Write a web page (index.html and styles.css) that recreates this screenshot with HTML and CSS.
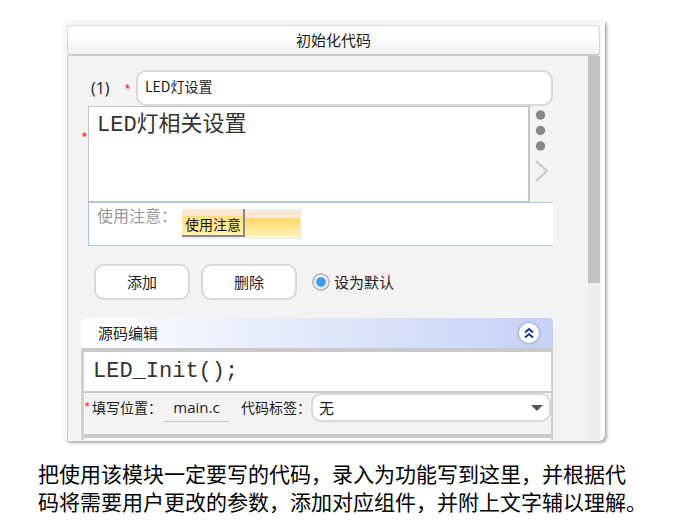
FILE: index.html
```
<!DOCTYPE html>
<html lang="zh-CN">
<head>
<meta charset="utf-8">
<title>初始化代码</title>
<link rel="stylesheet" href="styles.css">
</head>
<body>
<main class="page">
  <section class="panel">
    <h1 class="panel-title">初始化代码</h1>
    <div class="panel-body">
      <form class="content">
        <div class="name-row">
          <label class="index" for="name">(1)</label>
          <span class="required">*</span>
          <input class="box name-input" id="name" type="text" value="LED灯设置">
        </div>
        <div class="desc-row">
          <label class="required desc-mark" for="desc">*</label>
          <textarea class="mono desc-input" id="desc">LED灯相关设置</textarea>
          <div class="tools">
            <svg class="dots" viewBox="0 0 12 44" aria-hidden="true">
              <circle cx="5.500" cy="7" r="4.700"/><circle cx="5.500" cy="22.500" r="4.700"/><circle cx="5.500" cy="38" r="4.700"/>
            </svg>
            <svg class="arrow" viewBox="0 0 14 22" aria-hidden="true"><path d="M1 1 12 11 1 21"/></svg>
          </div>
        </div>
        <div class="note-row">
          <label class="note-label" for="note">使用注意：</label>
          <div class="note-field">
            <span class="note-tag">使用注意</span>
            <input class="note-input" id="note" type="text">
          </div>
        </div>
        <div class="actions">
          <button class="box action" type="button">添加</button>
          <button class="box action" type="button">删除</button>
          <label class="default"><input class="radio" type="radio" checked>设为默认</label>
        </div>
        <div class="source">
          <header class="source-head">
            <h2 class="source-title">源码编辑</h2>
            <button class="collapse" type="button" aria-label="收起">
              <svg viewBox="0 0 20 20" aria-hidden="true"><path d="M6 9.500 10 6l4 3.500M6 14.500 10 11l4 3.500"/></svg>
            </button>
          </header>
          <div class="source-frame">
            <input class="mono code" type="text" value="LED_Init();" aria-label="源码编辑">
            <div class="meta">
              <label class="meta-label" for="place"><span class="required">*</span>填写位置：</label>
              <input class="place" id="place" type="text" value="main.c">
              <label class="meta-label" for="tag">代码标签：</label>
              <div class="select-wrap">
                <select class="box tag" id="tag"><option>无</option></select>
              </div>
            </div>
            <div class="next"></div>
          </div>
        </div>
      </form>
      <div class="scrollbar"><div class="thumb"></div></div>
    </div>
  </section>
  <p class="caption">把使用该模块一定要写的代码，录入为功能写到这里，并根据代<br>码将需要用户更改的参数，添加对应组件，并附上文字辅以理解。</p>
</main>
</body>
</html>
```
FILE: styles.css
```
* { box-sizing: border-box; }

body {
  margin: 0;
  background: #fff;
  color: #1c1c1c;
  font: 15px/20px "Noto Sans CJK SC", sans-serif;
}

input, textarea, select, button {
  margin: 0;
  font: inherit;
  color: inherit;
  outline: 0;
}

h1, h2, p { margin: 0; font-weight: 400; }

.page { padding: 20px 20px 0 38px; }

.panel {
  margin: 0 55px 0 25px;
  padding: 5px 5px 1px 4px;
  background: #f8f8f8;
  border-radius: 4px 4px 6px 6px;
  box-shadow: 2px 2px 3px #aaa;
}

.panel-title {
  height: 31px;
  border: 1px solid #d6d6d6;
  border-bottom: 2px solid #ccc;
  border-radius: 4px;
  background: linear-gradient(#fff 30%, #f1f1f1);
  font-size: 15px;
  line-height: 28px;
  text-align: center;
}

.panel-body {
  display: flex;
  border-left: 1px solid #c8c8c8;
  background: #f3f3f3;
}

.content { flex: 1; min-width: 0; padding: 14px 35px 0 13px; }

.box {
  border: 2px solid #d8d8d8;
  border-radius: 10px;
  background: #fff;
}

.mono {
  border: 0;
  background: #fff;
  color: #333;
  font: 22px/26px "Liberation Mono", "Noto Sans CJK SC", monospace;
}

.required { color: #f33; }

.name-row { display: flex; align-items: center; padding-left: 10px; }
.index { width: 33px; font: 16px/20px "Open Sans", sans-serif; }
.name-row .required { width: 12px; padding-top: 4px; }
.name-input { flex: 1; min-width: 0; height: 36px; padding: 0 7px 4px; font-size: 14px; }

.desc-row { display: flex; }
.desc-mark { width: 7px; padding-top: 22px; }
.desc-input {
  flex: 1;
  min-width: 0;
  height: 96px;
  padding: 6px 8px;
  border: 1px solid #c6c6c6;
  border-right-width: 2px;
  resize: none;
}
.tools { width: 23px; padding: 2px 0 0 5px; }
.dots { display: block; width: 12px; height: 44px; fill: #888; }
.arrow {
  display: block;
  width: 14px;
  height: 22px;
  margin-top: 8px;
  fill: none;
  stroke: #c8c8c8;
  stroke-width: 2;
}

.note-row {
  display: flex;
  height: 44px;
  margin-left: 7px;
  padding-left: 8px;
  border: 1px solid #a9c6e8;
  border-right: 0;
  background: #fff;
}
.note-label { width: 85px; padding-top: 2px; color: #999; font-size: 16px; }
.note-field {
  display: flex;
  width: 120px;
  height: 30px;
  margin-top: 6px;
  border: 2px solid #f2f0ee;
  background: linear-gradient(#fde7d2 26%, #fed766 28%, #fff3bb);
}
.note-tag {
  flex: none;
  width: 63px;
  margin: -2px 0 0 -2px;
  padding: 5px 0 0 3px;
  border: solid #888;
  border-width: 0 2px 2px 0;
  background: linear-gradient(#fde7d2 26%, #ffe08a 28%, #fff3a8);
  white-space: nowrap;
  color: #111;
  font-size: 14px;
}
.note-input { width: 0; flex: 1; border: 0; background: none; }

.actions { display: flex; align-items: center; gap: 11px; padding: 18px 0 18px 13px; }
.action { width: 96px; height: 36px; padding: 0; color: #1c1c1c; }
.default { display: flex; align-items: center; gap: 4px; margin-left: 4px; }
.radio {
  appearance: none;
  width: 18px;
  height: 18px;
  border: 2px solid #bbb;
  border-radius: 50%;
  background: radial-gradient(circle, #4399e4 4px, #fff 6px);
}

.source-head {
  display: flex;
  align-items: center;
  justify-content: space-between;
  height: 30px;
  padding: 0 14px 0 17px;
  border-radius: 4px 4px 0 0;
  background: linear-gradient(90deg, #fff, #c5d1f6);
}
.source-title { font-size: 15px; }
.collapse {
  width: 20px;
  height: 20px;
  padding: 0;
  border: 0;
  border-radius: 50%;
  background: #fff;
  box-shadow: 0 0 2px 1px #a4aed0;
}
.collapse svg { display: block; fill: none; stroke: #1538a0; stroke-width: 2; }

.source-frame {
  border: solid #d2d2d2;
  border-width: 4px 2px 0 3px;
  border-top-color: #c9c9c9;
}
.code {
  display: block;
  width: 100%;
  height: 41px;
  padding: 0 9px;
  border-bottom: 2px solid #c8c8c8;
}
.meta { display: flex; align-items: flex-start; height: 41px; }
.meta-label { font-size: 14px; line-height: 28px; white-space: nowrap; }
.meta-label .required { display: inline-block; width: 8px; }
.place {
  width: 65px;
  height: 29px;
  margin: 0 12px 0 2px;
  padding: 0;
  border: 0;
  border-bottom: 1px solid #c8c8c8;
  background: none;
  font-family: "Open Sans", sans-serif;
  text-align: center;
}
.select-wrap { position: relative; flex: 1; min-width: 0; }
.select-wrap::after {
  content: "";
  position: absolute;
  top: 12px;
  right: 8px;
  border: solid transparent;
  border-width: 6px 6px 0;
  border-top-color: #555;
  pointer-events: none;
}
.tag { appearance: none; display: block; width: 100%; height: 29px; padding: 0 6px; }
.next { height: 6px; border-top: 4px solid #c9c9c9; background: #fff; }

.scrollbar { flex: none; width: 12px; background: #eee; }
.thumb { height: 59%; background: #c2c2c2; }

.caption {
  padding-top: 18px;
  color: #000;
  font-size: 21px;
  line-height: 28px;
}
```
